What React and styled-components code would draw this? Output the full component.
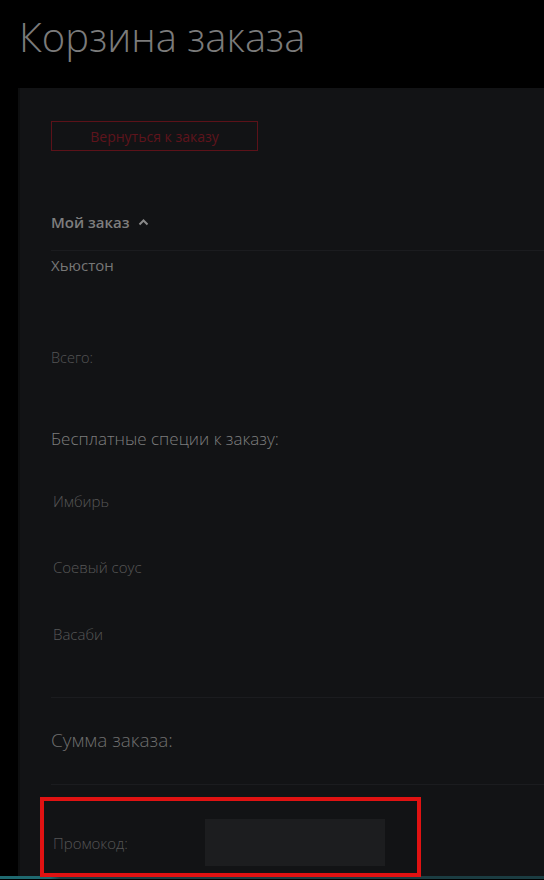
import styled, { createGlobalStyle } from "styled-components";

const GlobalStyle = createGlobalStyle`
  html, body {
    margin: 0;
    padding: 0;
    background: #000;
  }
  body {
    font-family: "Open Sans", "Liberation Sans", sans-serif;
    overflow: hidden;
  }
`;

const Page = styled.div`
  width: 544px;
  min-height: 880px;
  background: #000;
`;

const Title = styled.h1`
  margin: 0;
  height: 88px;
  box-sizing: border-box;
  padding: 12px 0 0 19px;
  font-size: 40px;
  font-weight: 300;
  line-height: 50px;
  color: #7b7b7b;
`;

const Panel = styled.section`
  margin-left: 18px;
  background: #121315;
  border-left: 2px solid #0d0e0f;
  padding: 33px 0 0 31px;
  display: flex;
  flex-direction: column;
`;

const BackButton = styled.button`
  width: 207px;
  height: 30px;
  background: transparent;
  border: 1px solid #5c1219;
  color: #5e141c;
  font-family: "Open Sans", sans-serif;
  font-size: 14px;
  padding: 0;
  cursor: pointer;
`;

const SectionHead = styled.div`
  margin-top: 46px;
  height: 54px;
  box-sizing: border-box;
  padding-bottom: 4px;
  display: flex;
  align-items: center;
  gap: 8px;
  font-size: 15px;
  font-weight: 600;
  color: #7e7e7e;
  border-bottom: 1px solid #1b1c1f;
`;

const Text = styled.div`
  margin-top: ${(p) => p.$top || 0}px;
  padding-left: ${(p) => p.$indent || 0}px;
  font-size: ${(p) => p.$size || 15}px;
  line-height: ${(p) => (p.$size || 15) + 5}px;
  color: ${(p) => p.$color || "#7c7c7c"};
  font-weight: ${(p) => (p.$light ? 300 : 400)};
  white-space: nowrap;
`;

const Divider = styled.hr`
  margin: ${(p) => p.$top || 0}px 0 0 0;
  border: 0;
  height: 1px;
  background: #1b1c1f;
`;

const SpiceList = styled.div`
  margin-top: 41px;
  display: flex;
  flex-direction: column;
  gap: 46.5px;
`;

const PromoFrame = styled.div`
  position: relative;
  z-index: 1;
  margin: 12px 0 -1px -11px;
  width: 381px;
  height: 80px;
  box-sizing: border-box;
  border: 4px solid #e01212;
  display: grid;
  grid-template-columns: 152px 180px;
  align-items: center;
  padding: 12px 0 0 9px;
`;

const PromoInput = styled.div`
  height: 47px;
  background: #1c1d1f;
`;

const FooterLine = styled.div`
  height: 3px;
  background: linear-gradient(90deg, #1f6a70 0, #1f6a70 50px, #1b3d42 60px, #1b3d42 100%);
`;

const spices = ["Имбирь", "Соевый соус", "Васаби"];

function Chevron() {
  return (
    <svg width="11" height="8" viewBox="0 0 11 8" fill="none">
      <path d="M1.5 6.5 L5.5 2.5 L9.5 6.5" stroke="#8a8a8a" strokeWidth="2" />
    </svg>
  );
}

export default function App() {
  return (
    <Page>
      <GlobalStyle />
      <Title>Корзина заказа</Title>
      <Panel>
        <div>
          <BackButton>Вернуться к заказу</BackButton>
        </div>
        <SectionHead>
          Мой заказ <Chevron />
        </SectionHead>
        <Text $top={4} $color="#777">Хьюстон</Text>
        <Text $top={73} $size={14.5} $color="#555" $light>
          Всего:
        </Text>
        <Text $top={60} $size={17} $color="#7e7e7e" $light>
          Бесплатные специи к заказу:
        </Text>
        <SpiceList>
          {spices.map((s) => (
            <Text key={s} $indent={2} $color="#585858" $light>
              {s}
            </Text>
          ))}
        </SpiceList>
        <Divider $top={53} />
        <Text $top={30} $size={19} $color="#6e6e6e" $light>
          Сумма заказа:
        </Text>
        <Divider $top={32} />
        <PromoFrame>
          <Text $size={15} $color="#555" $light>
            Промокод:
          </Text>
          <PromoInput />
        </PromoFrame>
      </Panel>
      <FooterLine />
    </Page>
  );
}
